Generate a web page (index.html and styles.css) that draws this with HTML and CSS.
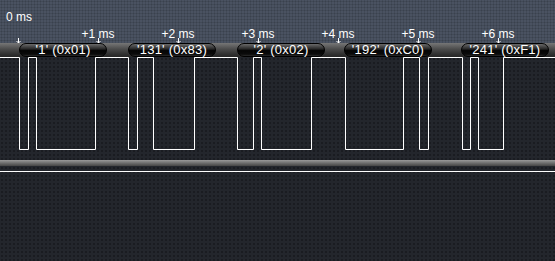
FILE: index.html
```html
<!DOCTYPE html>
<html lang="en">
<head>
    <meta charset="UTF-8">
    <title>UART capture</title>
    <link rel="stylesheet" href="styles.css">
</head>
<body>
    <div class="scope">
        <div class="ruler">
            <span class="origin">0 ms</span>
            <span class="tick" style="left: 78px">+1 ms</span>
            <span class="tick" style="left: 158px">+2 ms</span>
            <span class="tick" style="left: 238px">+3 ms</span>
            <span class="tick" style="left: 318px">+4 ms</span>
            <span class="tick" style="left: 398px">+5 ms</span>
            <span class="tick" style="left: 478px">+6 ms</span>
            <svg class="arrows" width="555" height="6" viewBox="0 0 555 6">
                <path d="M18.5 0V5M16.5 3L18.5 5L20.5 3
                         M98.5 0V5M96.5 3L98.5 5L100.5 3
                         M178.5 0V5M176.5 3L178.5 5L180.5 3
                         M258.5 0V5M256.5 3L258.5 5L260.5 3
                         M338.5 0V5M336.5 3L338.5 5L340.5 3
                         M418.5 0V5M416.5 3L418.5 5L420.5 3
                         M498.5 0V5M496.5 3L498.5 5L500.5 3"
                      fill="none" stroke="#fff" stroke-width="1"/>
            </svg>
        </div>

        <div class="track">
            <div class="byte" style="left: 19px">'1' (0x01)</div>
            <div class="byte" style="left: 128px">'131' (0x83)</div>
            <div class="byte" style="left: 237px">'2' (0x02)</div>
            <div class="byte" style="left: 344px">'192' (0xC0)</div>
            <div class="byte" style="left: 461px">'241' (0xF1)</div>
        </div>

        <svg class="wave" width="555" height="103" viewBox="0 0 555 103">
            <path d="M0 0.5H19.5V92.5H28.5V0.5H36.5V92.5H95.5V0.5
                     H128.5V92.5H137.5V0.5H153.5V92.5H194.5V0.5
                     H237.5V92.5H253.5V0.5H261.5V92.5H311.5V0.5
                     H345.5V92.5H403.5V0.5H419.5V92.5H428.5V0.5
                     H462.5V92.5H470.5V0.5H478.5V92.5H503.5V0.5H555"
                  fill="none" stroke="#fff" stroke-width="1"/>
        </svg>

        <div class="divider"></div>

        <div class="lower">
            <div class="idle-line"></div>
        </div>
    </div>
</body>
</html>
```

FILE: styles.css
```css
body {
    margin: 0;
    background: #22252b;
    font-family: "Liberation Sans", Arial, sans-serif;
    color: #fff;
}
.scope {
    width: 555px;
    height: 261px;
    overflow: hidden;
    display: flex;
    flex-direction: column;
}
.ruler {
    position: relative;
    height: 43px;
    flex: none;
    background-color: #4a5261;
    background-image: radial-gradient(circle, #3a414d 0.8px, transparent 1.2px);
    background-size: 3px 3px;
}
.origin {
    position: absolute;
    left: 6px;
    top: 11px;
    font-size: 12px;
    line-height: 12px;
}
.tick {
    position: absolute;
    top: 28px;
    width: 40px;
    text-align: center;
    font-size: 12px;
    line-height: 12px;
    white-space: nowrap;
}
.arrows {
    position: absolute;
    left: 0;
    top: 38px;
    display: block;
}
.track {
    position: relative;
    height: 14px;
    flex: none;
    background: linear-gradient(#767676, #4a4a4a 45%, #303030 80%, #262626);
}
.byte {
    position: absolute;
    top: 0;
    width: 86px;
    height: 12px;
    border: 1px solid #000;
    border-radius: 7px;
    background: linear-gradient(#6a6a6a, #2a2a2a 40%, #050505 55%, #0b0b0b 85%, #2c2c2c);
    font-size: 13px;
    line-height: 12px;
    letter-spacing: 0.25px;
    text-align: center;
    white-space: nowrap;
}
.wave {
    display: block;
    flex: none;
    background-color: #23262c;
    background-image: radial-gradient(circle, #1a1c21 0.9px, transparent 1.3px);
    background-size: 4px 4px;
}
.divider {
    height: 6px;
    flex: none;
    background: linear-gradient(#9a9a9a, #6e6e6e 50%, #454545);
}
.lower {
    flex: 1;
    padding-top: 5px;
    background-color: #23262c;
    background-image: radial-gradient(circle, #1a1c21 0.9px, transparent 1.3px);
    background-size: 4px 4px;
}
.idle-line {
    height: 1px;
    background: #fff;
}
```
